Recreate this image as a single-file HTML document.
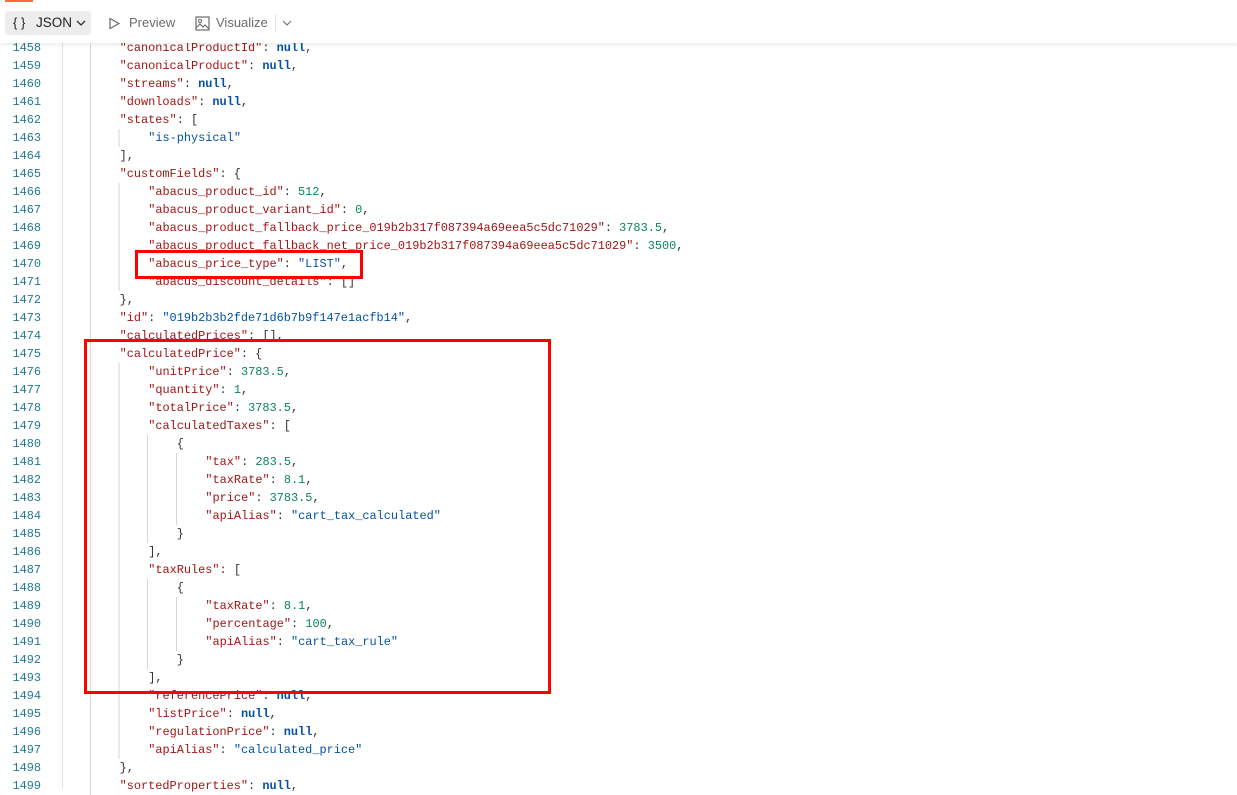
<!DOCTYPE html>
<html><head><meta charset="utf-8"><style>
body{margin:0;width:1237px;height:788px;overflow:hidden;background:#fff;font-family:"Liberation Sans",sans-serif;position:relative}
.top{position:absolute;left:5px;top:0;width:28px;height:2px;background:#ff6c37}
.bar{position:absolute;left:0;top:0;width:1237px;height:43px;background:#fff;box-shadow:0 2px 4px rgba(0,0,0,.08);z-index:3}
.btn{position:absolute;top:11px;height:24px;line-height:24px;font-size:13px;color:#212121}
.json{left:5px;width:86px;background:#ededed;border-radius:4px}
.gut{position:absolute;left:62px;top:0;width:1px;height:788px;background:#e0e0e0}
.code{position:absolute;left:0;top:39px;font-family:"Liberation Mono",monospace;font-size:11.9px}
.l{height:18px;line-height:18px;white-space:pre;position:relative;padding-left:calc(91px + var(--n)*28.6px);background:repeating-linear-gradient(to right,#d6d6d6 0 1px,transparent 1px 28.6px) 90px 0/calc(var(--n)*28.6px) 100% no-repeat;color:#333}
.l b{position:absolute;left:0;width:41px;text-align:right;font-weight:normal;color:#237893}
.k{color:#a31515}.s{color:#0451a5}.m{color:#098658}.u{color:#0451a5;font-weight:bold}
.box{position:absolute;border:3px solid #f00;z-index:2}
</style></head><body>
<div class="bar">
<div class="top"></div>
<div class="btn json"><span style="position:absolute;left:8px">{&nbsp;}</span><span style="position:absolute;left:31px;font-size:13.5px">JSON</span><svg style="position:absolute;left:71px;top:9px" width="10" height="6"><path d="M1 1l4 4 4-4" fill="none" stroke="#333" stroke-width="1.3"/></svg></div>
<div class="btn" style="left:108px;color:#6b6b6b"><svg style="position:absolute;left:0;top:6px" width="12" height="13"><path d="M2 1.5v10l9-5z" fill="none" stroke="#6b6b6b" stroke-width="1.2"/></svg><span style="position:absolute;left:21px">Preview</span></div>
<div class="btn" style="left:195px;color:#6b6b6b"><svg style="position:absolute;left:0;top:5px" width="15" height="15"><rect x="1" y="1" width="13" height="13" fill="none" stroke="#6b6b6b" stroke-width="1.2"/><circle cx="5" cy="5" r="1.5" fill="none" stroke="#6b6b6b"/><path d="M1 12l4-4 3 3 2-2 4 4" fill="none" stroke="#6b6b6b" stroke-width="1.2"/></svg><span style="position:absolute;left:21px;width:60px">Visualize</span></div>
<div style="position:absolute;left:275px;top:15px;width:1px;height:17px;background:#ddd"></div>
<svg style="position:absolute;left:282px;top:20px" width="10" height="6"><path d="M1 1l4 4 4-4" fill="none" stroke="#777" stroke-width="1.2"/></svg>
</div>
<div class="gut"></div>
<div class="code">
<div class="l" style="--n:1"><b>1458</b><span class="k">"canonicalProductId"</span>: <span class="u">null</span>,</div>
<div class="l" style="--n:1"><b>1459</b><span class="k">"canonicalProduct"</span>: <span class="u">null</span>,</div>
<div class="l" style="--n:1"><b>1460</b><span class="k">"streams"</span>: <span class="u">null</span>,</div>
<div class="l" style="--n:1"><b>1461</b><span class="k">"downloads"</span>: <span class="u">null</span>,</div>
<div class="l" style="--n:1"><b>1462</b><span class="k">"states"</span>: [</div>
<div class="l" style="--n:2"><b>1463</b><span class="s">"is-physical"</span></div>
<div class="l" style="--n:1"><b>1464</b>],</div>
<div class="l" style="--n:1"><b>1465</b><span class="k">"customFields"</span>: {</div>
<div class="l" style="--n:2"><b>1466</b><span class="k">"abacus_product_id"</span>: <span class="m">512</span>,</div>
<div class="l" style="--n:2"><b>1467</b><span class="k">"abacus_product_variant_id"</span>: <span class="m">0</span>,</div>
<div class="l" style="--n:2"><b>1468</b><span class="k">"abacus_product_fallback_price_019b2b317f087394a69eea5c5dc71029"</span>: <span class="m">3783.5</span>,</div>
<div class="l" style="--n:2"><b>1469</b><span class="k">"abacus_product_fallback_net_price_019b2b317f087394a69eea5c5dc71029"</span>: <span class="m">3500</span>,</div>
<div class="l" style="--n:2"><b>1470</b><span class="k">"abacus_price_type"</span>: <span class="s">"LIST"</span>,</div>
<div class="l" style="--n:2"><b>1471</b><span class="k">"abacus_discount_details"</span>: []</div>
<div class="l" style="--n:1"><b>1472</b>},</div>
<div class="l" style="--n:1"><b>1473</b><span class="k">"id"</span>: <span class="s">"019b2b3b2fde71d6b7b9f147e1acfb14"</span>,</div>
<div class="l" style="--n:1"><b>1474</b><span class="k">"calculatedPrices"</span>: [],</div>
<div class="l" style="--n:1"><b>1475</b><span class="k">"calculatedPrice"</span>: {</div>
<div class="l" style="--n:2"><b>1476</b><span class="k">"unitPrice"</span>: <span class="m">3783.5</span>,</div>
<div class="l" style="--n:2"><b>1477</b><span class="k">"quantity"</span>: <span class="m">1</span>,</div>
<div class="l" style="--n:2"><b>1478</b><span class="k">"totalPrice"</span>: <span class="m">3783.5</span>,</div>
<div class="l" style="--n:2"><b>1479</b><span class="k">"calculatedTaxes"</span>: [</div>
<div class="l" style="--n:3"><b>1480</b>{</div>
<div class="l" style="--n:4"><b>1481</b><span class="k">"tax"</span>: <span class="m">283.5</span>,</div>
<div class="l" style="--n:4"><b>1482</b><span class="k">"taxRate"</span>: <span class="m">8.1</span>,</div>
<div class="l" style="--n:4"><b>1483</b><span class="k">"price"</span>: <span class="m">3783.5</span>,</div>
<div class="l" style="--n:4"><b>1484</b><span class="k">"apiAlias"</span>: <span class="s">"cart_tax_calculated"</span></div>
<div class="l" style="--n:3"><b>1485</b>}</div>
<div class="l" style="--n:2"><b>1486</b>],</div>
<div class="l" style="--n:2"><b>1487</b><span class="k">"taxRules"</span>: [</div>
<div class="l" style="--n:3"><b>1488</b>{</div>
<div class="l" style="--n:4"><b>1489</b><span class="k">"taxRate"</span>: <span class="m">8.1</span>,</div>
<div class="l" style="--n:4"><b>1490</b><span class="k">"percentage"</span>: <span class="m">100</span>,</div>
<div class="l" style="--n:4"><b>1491</b><span class="k">"apiAlias"</span>: <span class="s">"cart_tax_rule"</span></div>
<div class="l" style="--n:3"><b>1492</b>}</div>
<div class="l" style="--n:2"><b>1493</b>],</div>
<div class="l" style="--n:2"><b>1494</b><span class="k">"referencePrice"</span>: <span class="u">null</span>,</div>
<div class="l" style="--n:2"><b>1495</b><span class="k">"listPrice"</span>: <span class="u">null</span>,</div>
<div class="l" style="--n:2"><b>1496</b><span class="k">"regulationPrice"</span>: <span class="u">null</span>,</div>
<div class="l" style="--n:2"><b>1497</b><span class="k">"apiAlias"</span>: <span class="s">"calculated_price"</span></div>
<div class="l" style="--n:1"><b>1498</b>},</div>
<div class="l" style="--n:1"><b>1499</b><span class="k">"sortedProperties"</span>: <span class="u">null</span>,</div>
</div>
<div class="box" style="left:135px;top:250px;width:222px;height:23px"></div>
<div class="box" style="left:84px;top:339px;width:461px;height:349px"></div>
</body></html>
